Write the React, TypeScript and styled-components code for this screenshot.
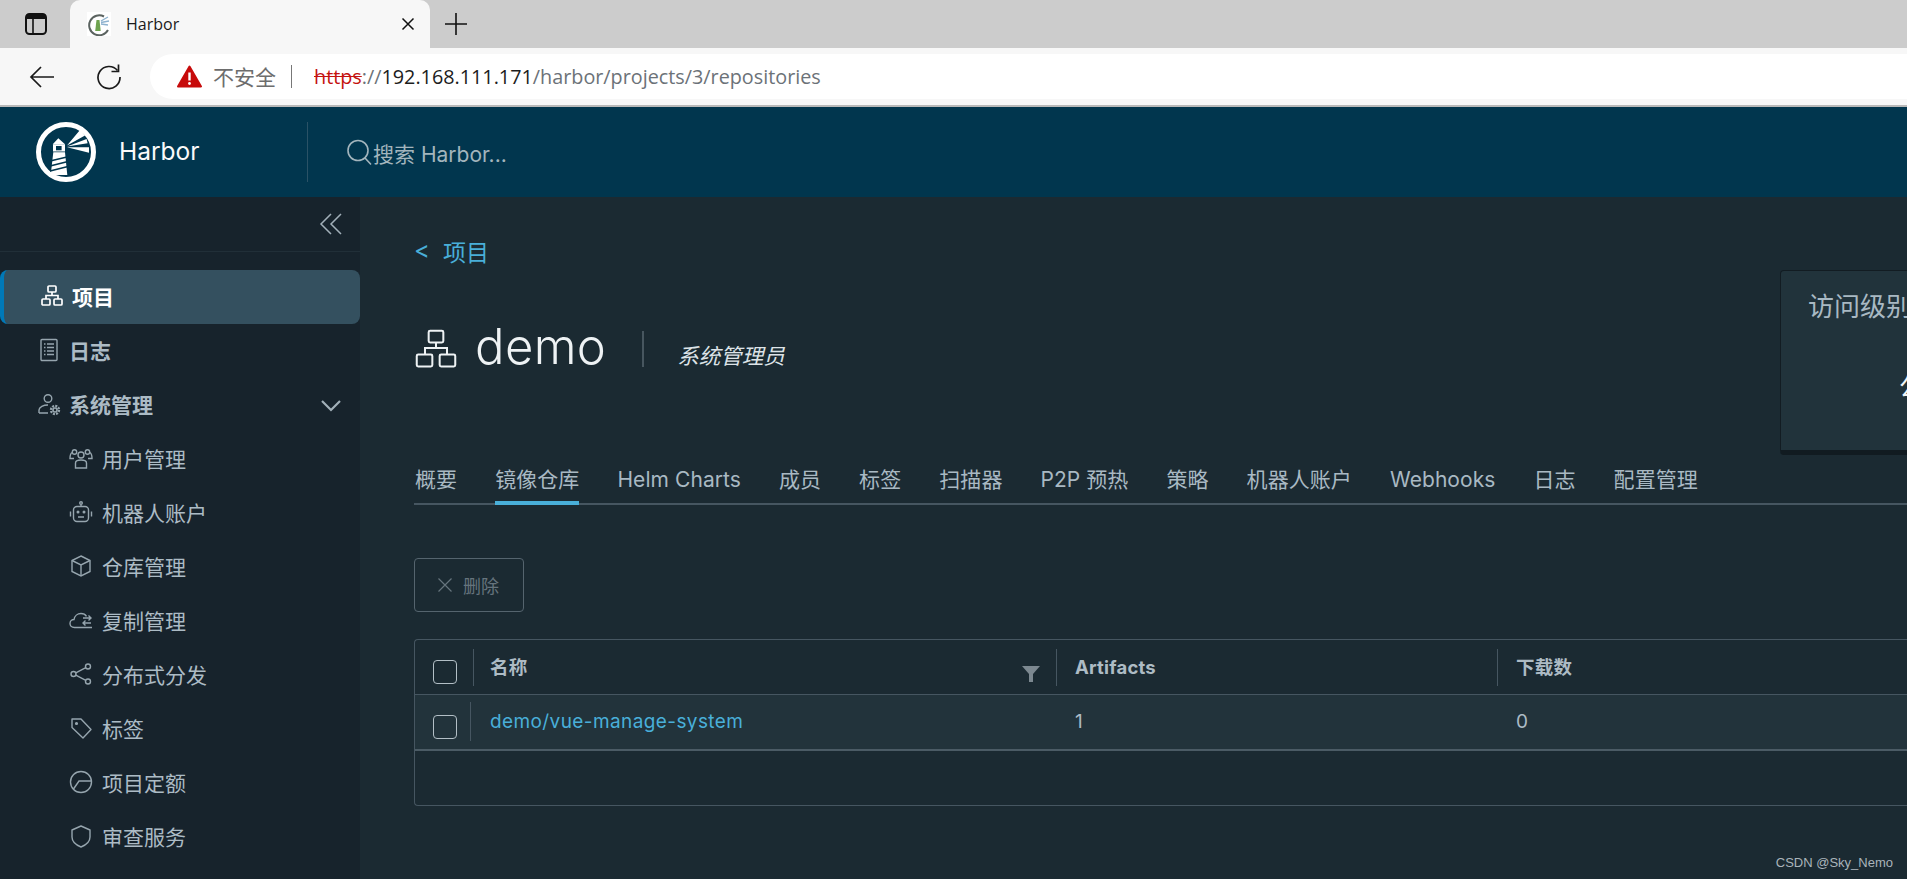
import React from "react";
import styled, { createGlobalStyle } from "styled-components";

const UI = `Inter, "Noto Sans CJK SC", sans-serif`;
const CHROME = `"Open Sans", "Noto Sans CJK SC", sans-serif`;

const Global = createGlobalStyle`
  html, body { margin: 0; padding: 0; background: #1b2a32; overflow: hidden; }
  * { box-sizing: border-box; }
`;

const Page = styled.div`
  width: 1907px;
  height: 879px;
  display: flex;
  flex-direction: column;
  overflow: hidden;
  font-family: ${UI};
`;

/* ---------- browser chrome ---------- */
const TabStrip = styled.div`
  height: 48px;
  flex: none;
  background: #cccccc;
  display: flex;
  align-items: flex-end;
  padding-left: 25px;
`;
const WindowIcon = styled.svg`
  width: 22px;
  height: 22px;
  margin: 0 23px 13px 0;
  flex: none;
`;
const BrowserTab = styled.div`
  width: 360px;
  height: 48px;
  background: #f7f7f7;
  border-radius: 10px 10px 0 0;
  display: flex;
  align-items: center;
  padding: 0 15px 0 17px;
  font-family: ${CHROME};
  font-size: 16px;
  color: #1a1a1a;
`;
const Favicon = styled.svg`
  width: 24px;
  height: 24px;
  margin-right: 15px;
  flex: none;
`;
const TabTitle = styled.span`
  flex: 1;
`;
const TabClose = styled.svg`
  width: 14px;
  height: 14px;
  flex: none;
`;
const NewTab = styled.svg`
  width: 22px;
  height: 22px;
  margin: 0 0 13px 15px;
  flex: none;
`;
const Toolbar = styled.div`
  height: 59px;
  flex: none;
  background: #f7f7f7;
  border-bottom: 2px solid #b9b9b9;
  display: flex;
  align-items: center;
  padding-left: 29px;
`;
const NavGlyph = styled.svg<{ $gap: number }>`
  width: 26px;
  height: 26px;
  flex: none;
  margin-right: ${(p) => p.$gap}px;
`;
const AddressBar = styled.div`
  flex: 1;
  height: 45px;
  background: #ffffff;
  border-radius: 23px 0 0 23px;
  display: flex;
  align-items: center;
  padding-left: 27px;
  font-family: ${CHROME};
  font-size: 19.8px;
`;
const WarnIcon = styled.svg`
  width: 25px;
  height: 23px;
  flex: none;
  margin-right: 11px;
`;
const Insecure = styled.span`
  color: #6d6d6d;
  font-size: 21px;
  margin-bottom: 2px;
`;
const AddrDivider = styled.span`
  width: 1px;
  height: 23px;
  background: #777;
  margin: 0 22px 0 15px;
`;
const Https = styled.span`
  color: #c4120f;
  text-decoration: line-through;
`;
const Host = styled.span`
  color: #1c1c1c;
`;
const UrlPath = styled.span`
  color: #6c7278;
`;

/* ---------- harbor header ---------- */
const Header = styled.header`
  height: 90px;
  flex: none;
  background: #01364e;
  display: flex;
  align-items: center;
  padding-left: 36px;
`;
const Logo = styled.svg`
  width: 60px;
  height: 60px;
  flex: none;
`;
const Brand = styled.span`
  margin: -2px 0 0 23px;
  width: 188px;
  font-size: 24.5px;
  color: #fafafa;
`;
const HeaderDivider = styled.span`
  width: 1px;
  height: 60px;
  background: #2a5266;
  flex: none;
`;
const SearchIcon = styled.svg`
  width: 27px;
  height: 27px;
  margin-left: 38px;
  flex: none;
`;
const SearchText = styled.span`
  font-size: 21px;
  color: #a3b5bd;
  margin-top: 2px;
`;

/* ---------- body ---------- */
const Body = styled.div`
  flex: 1;
  display: flex;
  min-height: 0;
`;
const Sidebar = styled.nav`
  width: 360px;
  flex: none;
  background: #17232c;
  display: flex;
  flex-direction: column;
`;
const CollapseRow = styled.div`
  height: 55px;
  flex: none;
  border-bottom: 1px solid #212f38;
  margin-bottom: 18px;
  display: flex;
  justify-content: flex-end;
  align-items: flex-start;
  padding: 15px 17px 0 0;
`;
const Chevrons = styled.svg`
  width: 24px;
  height: 24px;
`;
const NavRow = styled.div<{ $active?: boolean; $sub?: boolean }>`
  height: 54px;
  flex: none;
  display: flex;
  align-items: center;
  padding-left: ${(p) => (p.$sub ? 69 : p.$active ? 36 : 37)}px;
  padding-right: 17px;
  padding-bottom: 2px;
  font-size: 21px;
  font-weight: ${(p) => (p.$sub ? 400 : 700)};
  color: ${(p) => (p.$active ? "#ffffff" : "#acbbc5")};
  background: ${(p) => (p.$active ? "#34505f" : "transparent")};
  border-radius: ${(p) => (p.$active ? "8px" : "0")};
  border-left: ${(p) => (p.$active ? "4px solid #0079b8" : "0 solid transparent")};
`;
const NavIconBox = styled.svg<{ $gap: number }>`
  width: 24px;
  height: 24px;
  flex: none;
  margin-right: ${(p) => p.$gap}px;
`;
const NavLabel = styled.span`
  flex: 1;
`;
const NavCaret = styled.svg`
  width: 24px;
  height: 24px;
  flex: none;
  margin-top: 4px;
`;

const Main = styled.main`
  flex: 1;
  min-width: 0;
  background: #1b2a32;
  overflow: hidden;
  padding: 0 0 0 54px;
  position: relative;
`;
const TopSection = styled.div`
  display: flex;
  height: 266px;
`;
const TitleColumn = styled.div`
  width: 1366px;
  flex: none;
`;
const Breadcrumb = styled.div`
  display: flex;
  align-items: center;
  height: 32px;
  margin-top: 38px;
  color: #49afd9;
  font-size: 23px;
`;
const BreadcrumbArrow = styled.span`
  width: 29px;
  font-size: 24px;
  margin-top: -4px;
`;
const TitleRow = styled.div`
  display: flex;
  align-items: center;
  margin-top: 59px;
  height: 46px;
`;
const ProjectIcon = styled.svg`
  width: 44px;
  height: 44px;
  flex: none;
`;
const ProjectName = styled.h1`
  margin: -5px 0 0 17px;
  font-size: 49px;
  font-weight: 300;
  color: #eef2f4;
  letter-spacing: 0.4px;
`;
const TitleDivider = styled.span`
  width: 2px;
  height: 36px;
  background: #47565f;
  margin: 0 33px 0 36px;
`;
const RoleText = styled.em`
  font-size: 21.5px;
  color: #dde3e7;
  margin-top: 10px;
`;
const AccessCard = styled.aside`
  width: 320px;
  height: 185px;
  flex: none;
  margin-top: 73px;
  padding: 15px 27px;
  background: #21333b;
  border: 1px solid #121c22;
  border-bottom: 5px solid #111b21;
  border-radius: 4px;
`;
const CardTitle = styled.div`
  font-size: 26px;
  color: #a9b9c3;
`;
const CardValue = styled.div`
  font-size: 26px;
  color: #f2f5f6;
  margin: 43px 0 0 91px;
  white-space: nowrap;
`;
const Tabs = styled.div`
  display: flex;
  gap: 38px;
  padding-left: 1px;
  border-bottom: 2px solid #465661;
  height: 42px;
  align-items: flex-start;
`;
const TabItem = styled.div<{ $active?: boolean }>`
  font-size: 21px;
  line-height: 34px;
  height: 42px;
  color: #a9b9c3;
  letter-spacing: 0.07px;
  white-space: nowrap;
  border-bottom: ${(p) => (p.$active ? "4px solid #49afd9" : "0 none")};
`;
const DeleteButton = styled.button`
  display: flex;
  align-items: center;
  width: 110px;
  height: 54px;
  margin-top: 53px;
  padding: 0 0 0 22px;
  background: transparent;
  border: 1px solid #55646e;
  border-radius: 4px;
  font-family: ${UI};
  font-size: 18px;
  color: #66747d;
`;
const DeleteIcon = styled.svg`
  width: 16px;
  height: 16px;
  margin-right: 10px;
  flex: none;
`;
const Grid = styled.div`
  margin-top: 27px;
  height: 167px;
  border: 1px solid #465661;
  border-right: 0;
  border-radius: 4px 0 0 4px;
`;
const GridRow = styled.div<{ $body?: boolean }>`
  display: grid;
  grid-template-columns: 58px 583px 441px 1fr;
  height: ${(p) => (p.$body ? 56 : 55)}px;
  background: ${(p) => (p.$body ? "#22333b" : "transparent")};
  border-bottom: ${(p) => (p.$body ? "2px solid #4b5b65" : "1px solid #465661")};
`;
const CheckCell = styled.div`
  padding: 20px 0 0 18px;
`;
const CheckBox = styled.span`
  display: block;
  width: 24px;
  height: 24px;
  border: 1px solid #b3bfc6;
  border-radius: 4px;
`;
const HeadCell = styled.div<{ $wide?: boolean }>`
  margin-top: 9px;
  height: 37px;
  border-left: 1px solid #465661;
  padding-left: ${(p) => (p.$wide ? 18 : 16)}px;
  display: flex;
  align-items: flex-start;
  justify-content: space-between;
  font-size: 18.5px;
  font-weight: 700;
  letter-spacing: 0.2px;
  color: #adbbc4;
  line-height: 37px;
`;
const FilterIcon = styled.svg`
  width: 18px;
  height: 18px;
  margin: 16px 16px 0 0;
  flex: none;
`;
const BodyCell = styled.div`
  font-size: 19px;
  line-height: 26px;
  color: #acbbc5;
  padding: 14px 0 0 19px;
`;
const NameCell = styled(BodyCell)`
  margin-top: 7px;
  height: 39px;
  padding-top: 7px;
  margin-left: -3px;
  padding-left: 19px;
  border-left: 1px solid #465661;
`;
const RepoLink = styled.a`
  color: #49afd9;
  letter-spacing: 0.4px;
`;
const Watermark = styled.div`
  position: absolute;
  right: 14px;
  bottom: 9px;
  font-family: "Liberation Sans", sans-serif;
  font-size: 13px;
  color: #aab4ba;
`;

const ico = { fill: "none", stroke: "#96a5ae", strokeWidth: 1.4 };

const icons: Record<string, React.ReactNode> = {
  project: (
    <g {...ico} stroke="currentColor" strokeWidth={1.7}>
      <rect x="8" y="2" width="8" height="6" rx="1" />
      <rect x="2" y="15" width="8" height="6" rx="1" />
      <rect x="14" y="15" width="8" height="6" rx="1" />
      <path d="M12 8v3.5M6 15v-3.5h12V15" />
    </g>
  ),
  log: (
    <g {...ico}>
      <rect x="4" y="1.5" width="16" height="21" rx="1" />
      <path d="M7 6h1.5M10 6h7M7 9.5h1.5M10 9.5h7M7 13h1.5M10 13h7M7 16.5h1.5M10 16.5h7" />
    </g>
  ),
  admin: (
    <g {...ico}>
      <circle cx="11" cy="6.5" r="3.8" />
      <path d="M2 21v-3c0-3 4.5-5 9-5M2 21h9" />
      <circle cx="18" cy="18" r="2.8" fill="#96a5ae" stroke="none" />
      <circle cx="18" cy="18" r="4" strokeWidth={2.4} strokeDasharray="2 1.1" />
      <circle cx="18" cy="18" r="1.2" fill="#17232c" stroke="none" />
    </g>
  ),
  users: (
    <g {...ico}>
      <circle cx="12" cy="9" r="3" />
      <circle cx="5.5" cy="6" r="2.2" />
      <circle cx="18.5" cy="6" r="2.2" />
      <path d="M6.5 22v-5c0-2 2-3 5.5-3s5.5 1 5.5 3v5z" />
      <path d="M3 6.5c-1.5 1-2 2.5-2 6h4M21 6.5c1.5 1 2 2.5 2 6h-4" />
    </g>
  ),
  robot: (
    <g {...ico}>
      <rect x="4.5" y="6.5" width="15" height="15" rx="3.5" />
      <circle cx="12" cy="3" r="1.3" />
      <path d="M12 4.5v2M1.5 11.5v5M22.5 11.5v5M9 17h6" />
      <circle cx="9" cy="12" r="0.8" fill="#96a5ae" />
      <circle cx="15" cy="12" r="0.8" fill="#96a5ae" />
    </g>
  ),
  box: (
    <g {...ico}>
      <path d="M12 2l9 4.5v11L12 22l-9-4.5v-11z" />
      <path d="M3 6.5l9 4.5 9-4.5M12 11v11" />
    </g>
  ),
  cloud: (
    <g {...ico}>
      <path d="M19 19.5H5.5C2.5 19.5 1 17.5 1 15.5c0-2.5 2-4 4-4 .5-3.5 3.5-6 7-6 2.5 0 4.5 1.2 5.5 2.8" />
      <path d="M23 19.5h-4M14 10h8M19.5 7.5l2.5 2.5-2.5 2.5M22 15h-8M16.5 12.5L14 15l2.5 2.5" />
    </g>
  ),
  share: (
    <g {...ico}>
      <circle cx="4.5" cy="12" r="2.5" />
      <circle cx="19" cy="4.5" r="2.5" />
      <circle cx="19" cy="19.5" r="2.5" />
      <path d="M6.8 10.8L16.8 5.7M6.8 13.2l10 5.1" />
    </g>
  ),
  tag: (
    <g {...ico}>
      <path d="M3 3h9l10 10.5-8 8.5L3 11.5z" strokeLinejoin="round" />
      <circle cx="7.5" cy="7.5" r="0.9" fill="#96a5ae" />
    </g>
  ),
  quota: (
    <g {...ico}>
      <circle cx="12" cy="12" r="10.5" />
      <path d="M22.5 11H10L4.5 19" />
    </g>
  ),
  shield: (
    <g {...ico}>
      <path d="M12 2l9 4v7c0 5-4 8-9 10-5-2-9-5-9-10V6z" strokeLinejoin="round" />
    </g>
  ),
};

const navItems = [
  { key: "project", label: "项目", gap: 8, active: true },
  { key: "log", label: "日志", gap: 8 },
  { key: "admin", label: "系统管理", gap: 8, caret: true },
  { key: "users", label: "用户管理", gap: 9, sub: true },
  { key: "robot", label: "机器人账户", gap: 9, sub: true },
  { key: "box", label: "仓库管理", gap: 9, sub: true },
  { key: "cloud", label: "复制管理", gap: 9, sub: true },
  { key: "share", label: "分布式分发", gap: 9, sub: true },
  { key: "tag", label: "标签", gap: 9, sub: true },
  { key: "quota", label: "项目定额", gap: 9, sub: true },
  { key: "shield", label: "审查服务", gap: 9, sub: true },
];

const tabs = ["概要", "镜像仓库", "Helm Charts", "成员", "标签", "扫描器", "P2P 预热", "策略", "机器人账户", "Webhooks", "日志", "配置管理"];

export default function App() {
  return (
    <Page>
      <Global />
      <TabStrip>
        <WindowIcon viewBox="0 0 22 22">
          <rect x="1" y="1" width="20" height="20" rx="3.5" fill="none" stroke="#111" strokeWidth="2" />
          <path d="M1 6V4a3 3 0 0 1 3-3h14a3 3 0 0 1 3 3v2z" fill="#111" />
          <path d="M8 6v15" stroke="#111" strokeWidth="1.6" />
        </WindowIcon>
        <BrowserTab>
          <Favicon viewBox="0 0 24 24">
            <rect width="24" height="24" fill="#fff" />
            <path d="M17 4.5A10 10 0 1 0 21 18" fill="none" stroke="#5b6360" strokeWidth="2" />
            <path d="M9.5 8h3l1.2 11H8.2z" fill="#6ea34f" />
            <path d="M14 9l7-4M14 10.5l8-1.5M14 12l7 1" stroke="#8fb3cf" strokeWidth="1.4" />
          </Favicon>
          <TabTitle>Harbor</TabTitle>
          <TabClose viewBox="0 0 14 14">
            <path d="M1.5 1.5l11 11M12.5 1.5l-11 11" stroke="#111" strokeWidth="1.5" />
          </TabClose>
        </BrowserTab>
        <NewTab viewBox="0 0 22 22">
          <path d="M11 0v22M0 11h22" stroke="#111" strokeWidth="1.6" />
        </NewTab>
      </TabStrip>
      <Toolbar>
        <NavGlyph $gap={41} viewBox="0 0 26 26">
          <path d="M25 13H2M12 3L2 13l10 10" fill="none" stroke="#1a1a1a" strokeWidth="1.7" />
        </NavGlyph>
        <NavGlyph $gap={28} viewBox="0 0 26 26">
          <path d="M21.5 6.5A11 11 0 1 0 24 13" fill="none" stroke="#1a1a1a" strokeWidth="1.7" />
          <path d="M22.5 0.5v7h-7" fill="none" stroke="#1a1a1a" strokeWidth="1.7" />
        </NavGlyph>
        <AddressBar>
          <WarnIcon viewBox="0 0 25 23">
            <path d="M12.5 1.5L24 21.5H1z" fill="#c70b0b" stroke="#c70b0b" strokeWidth="2" strokeLinejoin="round" />
            <path d="M12.5 7.5v8" stroke="#fff" strokeWidth="2.4" />
            <circle cx="12.5" cy="18.5" r="1.4" fill="#fff" />
          </WarnIcon>
          <Insecure>不安全</Insecure>
          <AddrDivider />
          <Https>https</Https>
          <UrlPath>://</UrlPath>
          <Host>192.168.111.171</Host>
          <UrlPath>/harbor/projects/3/repositories</UrlPath>
        </AddressBar>
      </Toolbar>
      <Header>
        <Logo viewBox="0 0 60 60">
          <circle cx="30" cy="30" r="27.5" fill="none" stroke="#fff" strokeWidth="5" />
          <path d="M22.3 16.3L29 22.3H16.7z" fill="#fff" />
          <path d="M17 22.3h12v7.2H17zM17.3 30.3H29L31.3 53H14.7z" fill="#fff" />
          <rect x="20" y="24" width="5.6" height="4.3" fill="#01364e" />
          <path d="M14 39l17-4M14 44l18-4.5M14 49l18-4.5" stroke="#01364e" strokeWidth="1.6" />
          <path d="M31 23.5L44 8l5 5.6zM31 24.5L50.6 17l1 4.3zM31 25.3h22v5.4z" fill="#fff" />
        </Logo>
        <Brand>Harbor</Brand>
        <HeaderDivider />
        <SearchIcon viewBox="0 0 27 27">
          <circle cx="12" cy="11.5" r="10" fill="none" stroke="#a3b5bd" strokeWidth="1.6" />
          <path d="M19 19l6 6.5" stroke="#a3b5bd" strokeWidth="1.6" />
        </SearchIcon>
        <SearchText>搜索 Harbor...</SearchText>
      </Header>
      <Body>
        <Sidebar>
          <CollapseRow>
            <Chevrons viewBox="0 0 24 24">
              <path d="M12 2L2 12l10 10M22 2L12 12l10 10" fill="none" stroke="#a2b0b9" strokeWidth="1.5" />
            </Chevrons>
          </CollapseRow>
          {navItems.map((item) => (
            <NavRow key={item.key} $active={item.active} $sub={item.sub}>
              <NavIconBox $gap={item.gap} viewBox="0 0 24 24">
                {icons[item.key]}
              </NavIconBox>
              <NavLabel>{item.label}</NavLabel>
              {item.caret && (
                <NavCaret viewBox="0 0 24 24">
                  <path d="M3 7l9 9 9-9" fill="none" stroke="#a2b0b9" strokeWidth="2.2" />
                </NavCaret>
              )}
            </NavRow>
          ))}
        </Sidebar>
        <Main>
          <TopSection>
            <TitleColumn>
              <Breadcrumb>
                <BreadcrumbArrow>&lt;</BreadcrumbArrow>
                项目
              </Breadcrumb>
              <TitleRow>
                <ProjectIcon viewBox="0 0 24 24">
                  <g fill="none" stroke="#eef2f4" strokeWidth="1.1">
                    <rect x="8" y="2" width="8" height="6.5" rx="0.8" />
                    <rect x="1.5" y="15" width="8.5" height="6.5" rx="0.8" />
                    <rect x="14" y="15" width="8.5" height="6.5" rx="0.8" />
                    <path d="M12 8.5v3M6 15v-3.5h12V15" />
                  </g>
                </ProjectIcon>
                <ProjectName>demo</ProjectName>
                <TitleDivider />
                <RoleText>系统管理员</RoleText>
              </TitleRow>
            </TitleColumn>
            <AccessCard>
              <CardTitle>访问级别</CardTitle>
              <CardValue>公开</CardValue>
            </AccessCard>
          </TopSection>
          <Tabs>
            {tabs.map((t) => (
              <TabItem key={t} $active={t === "镜像仓库"}>
                {t}
              </TabItem>
            ))}
          </Tabs>
          <DeleteButton>
            <DeleteIcon viewBox="0 0 16 16">
              <path d="M1.5 1.5l13 13M14.5 1.5l-13 13" stroke="#66747d" strokeWidth="1.2" />
            </DeleteIcon>
            删除
          </DeleteButton>
          <Grid>
            <GridRow>
              <CheckCell>
                <CheckBox />
              </CheckCell>
              <HeadCell>
                名称
                <FilterIcon viewBox="0 0 18 18">
                  <path d="M0 1h18l-7 8v8H7V9z" fill="#7c8890" />
                </FilterIcon>
              </HeadCell>
              <HeadCell $wide>Artifacts</HeadCell>
              <HeadCell $wide>下载数</HeadCell>
            </GridRow>
            <GridRow $body>
              <CheckCell>
                <CheckBox />
              </CheckCell>
              <NameCell>
                <RepoLink>demo/vue-manage-system</RepoLink>
              </NameCell>
              <BodyCell>1</BodyCell>
              <BodyCell>0</BodyCell>
            </GridRow>
          </Grid>
          <Watermark>CSDN @Sky_Nemo</Watermark>
        </Main>
      </Body>
    </Page>
  );
}
